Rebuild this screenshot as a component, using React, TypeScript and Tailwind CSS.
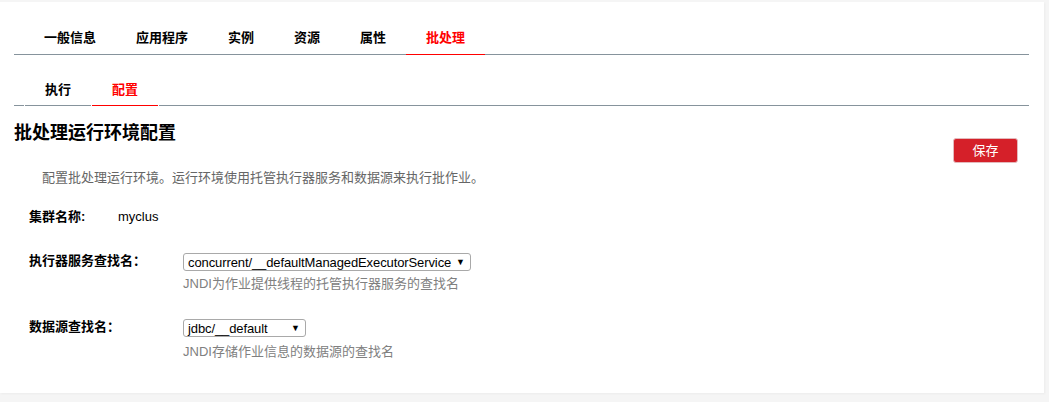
import React from 'react';

const mainTabs = ['一般信息', '应用程序', '实例', '资源', '属性', '批处理'];
const subTabs = ['执行', '配置'];

const FONT = "font-['Liberation_Sans','Noto_Sans_CJK_SC',sans-serif]";

const FakeSelect: React.FC<{ value: string; width: string }> = ({ value, width }) => (
  <div
    className={`${width} h-[18px] flex items-center justify-between border border-[#a9a9a9] rounded-[3px] bg-white pl-[4px] pr-[5px] text-[13px] leading-none text-black`}
  >
    <span className="whitespace-nowrap tracking-[-0.1px]">{value}</span>
    <span className="text-[9px] leading-none">▼</span>
  </div>
);

export default function App() {
  return (
    <div className={`min-h-screen bg-[#f5f5f5] pt-[2px] pr-[5px] ${FONT}`}>
      <div className="bg-white h-[391px] pl-[14px] pr-[15px] shadow-[1px_1px_2px_rgba(0,0,0,0.04)]">
        {/* Main tabs */}
        <div className="flex pt-[20px]">
          <div className="w-[10px] border-b border-[#86939c]" />
          {mainTabs.map((t) => {
            const active = t === '批处理';
            return (
              <div
                key={t}
                className={`h-[33px] px-[20px] flex items-center text-[13px] font-bold border-b ${
                  active ? 'text-[#ff0000] border-[#ff0000]' : 'text-black border-[#86939c]'
                }`}
              >
                {t}
              </div>
            );
          })}
          <div className="flex-1 border-b border-[#86939c]" />
        </div>

        {/* Sub tabs */}
        <div className="flex mt-[20px] gap-[1px]">
          <div className="w-[10px] border-b border-[#86939c]" />
          {subTabs.map((t) => {
            const active = t === '配置';
            return (
              <div
                key={t}
                className={`h-[31px] px-[20px] flex items-center text-[13px] font-bold border-b ${
                  active ? 'text-[#ff0000] border-[#ff0000]' : 'text-black border-[#86939c]'
                }`}
              >
                {t}
              </div>
            );
          })}
          <div className="flex-1 border-b border-[#86939c]" />
        </div>

        {/* Heading + save */}
        <div className="flex justify-between items-start mt-[15px]">
          <div>
            <h1 className="text-[18px] leading-[24px] font-bold text-black">批处理运行环境配置</h1>
            <p className="mt-[23px] ml-[28px] text-[13px] leading-[20px] text-[#666]">
              配置批处理运行环境。运行环境使用托管执行器服务和数据源来执行批作业。
            </p>
          </div>
          <button className="mt-[17px] mr-[11px] w-[65px] h-[25px] rounded-[3px] bg-[#d52029] border border-[#e3b9bc] text-white text-[13px] leading-none">
            保存
          </button>
        </div>

        {/* Fields */}
        <div className="ml-[15px]">
          <div className="flex mt-[19px] text-[13px] leading-[20px]">
            <div className="w-[89px] font-bold text-black">集群名称:</div>
            <div className="text-black">myclus</div>
          </div>

          <div className="flex mt-[24px] text-[13px]">
            <div className="w-[154px] font-bold text-black leading-[18px] pt-px">执行器服务查找名：</div>
            <div className="pt-[2px]">
              <FakeSelect value="concurrent/__defaultManagedExecutorService" width="w-[288px]" />
              <div className="mt-[4px] leading-[18px] text-[#808080]">JNDI为作业提供线程的托管执行器服务的查找名</div>
            </div>
          </div>

          <div className="flex mt-[24px] text-[13px]">
            <div className="w-[154px] font-bold text-black leading-[18px] pt-px">数据源查找名：</div>
            <div className="pt-[2px]">
              <FakeSelect value="jdbc/__default" width="w-[123px]" />
              <div className="mt-[6px] leading-[18px] text-[#808080]">JNDI存储作业信息的数据源的查找名</div>
            </div>
          </div>
        </div>
      </div>
    </div>
  );
}
